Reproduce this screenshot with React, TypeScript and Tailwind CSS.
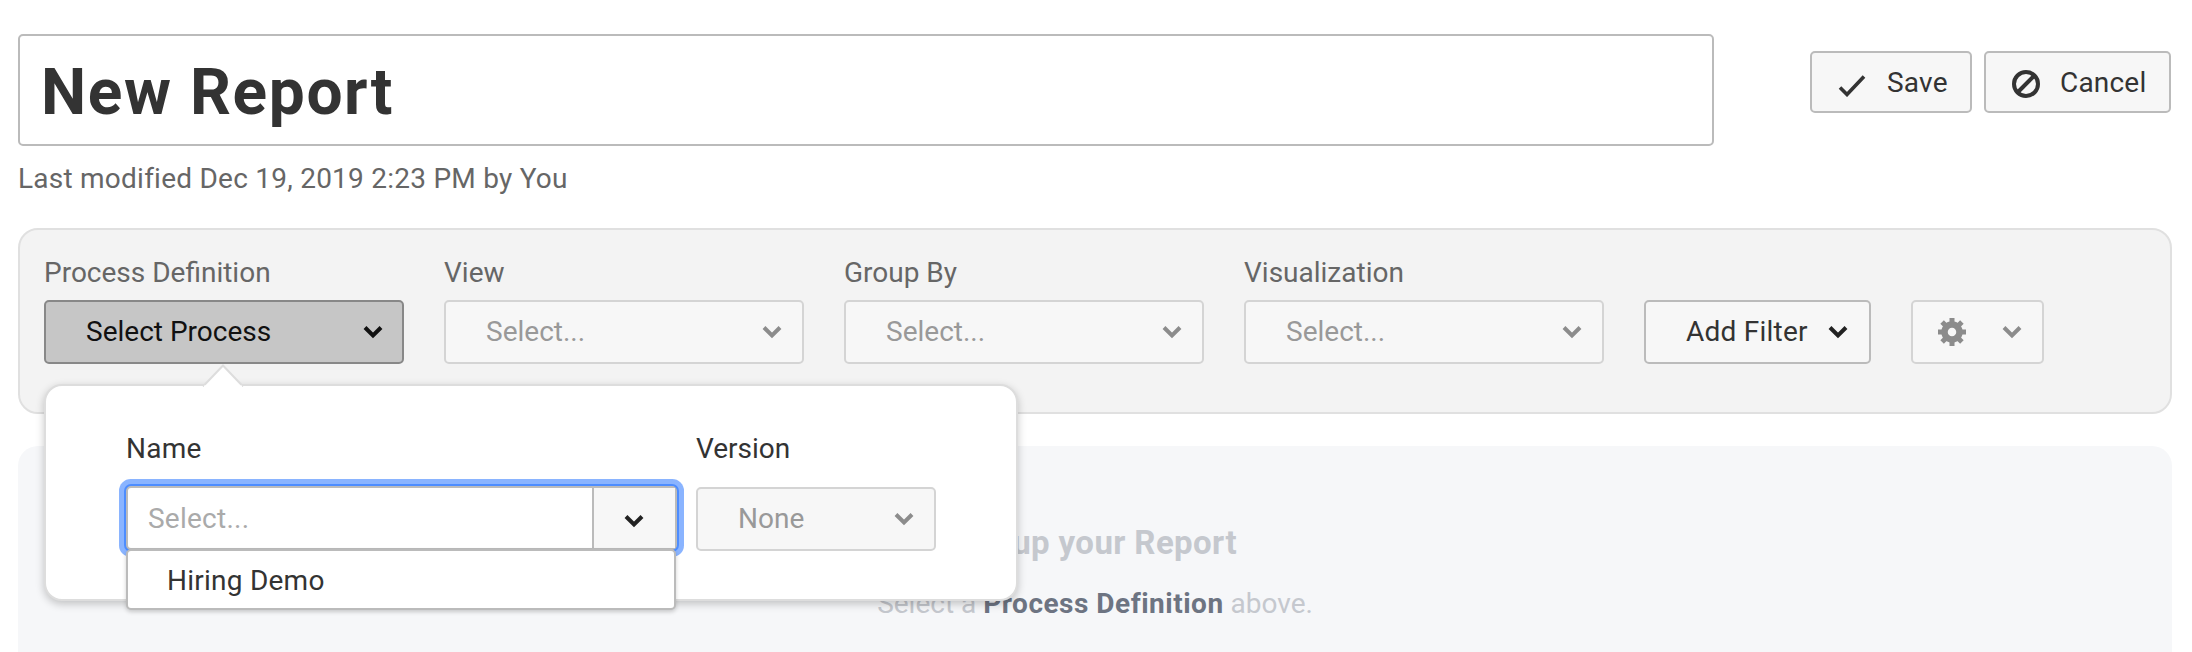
import React from "react";

const FONT = "font-['Roboto','Liberation_Sans',sans-serif]";

function Chevron({ className }: { className: string }) {
  return (
    <svg viewBox="0 0 20 14" className={className} fill="none" stroke="currentColor" strokeWidth="4">
      <path d="M2 2.5l8 8 8-8" />
    </svg>
  );
}

function Gear() {
  return (
    <svg viewBox="0 0 28 28" className="h-[28px] w-[28px] text-[#8c8c8c]" fill="none" stroke="currentColor">
      <circle cx="14" cy="14" r="7.5" strokeWidth="6.5" />
      <g strokeWidth="5">
        <path d="M14 0v5M14 23v5M0 14h5M23 14h5" />
        <path d="M4.1 4.1l3.5 3.5M20.4 20.4l3.5 3.5M23.9 4.1l-3.5 3.5M7.6 20.4l-3.5 3.5" />
      </g>
    </svg>
  );
}

function Field({ label, children }: { label: string; children: React.ReactNode }) {
  return (
    <div className="flex w-[360px] flex-col">
      <label className="mb-[10px] h-[45px] pt-[10px] text-[28px] leading-[36px] text-[#666]">{label}</label>
      {children}
    </div>
  );
}

function DisabledSelect({ text, className }: { text: string; className: string }) {
  return (
    <div className={`flex h-[64px] items-center justify-between rounded-[5px] border-2 border-[#d4d4d4] bg-[#f7f7f7] pl-[40px] pr-[20px] text-[28px] text-[#999] ${className}`}>
      <span>{text}</span>
      <Chevron className="h-[14px] w-[20px] text-[#8c8c8c]" />
    </div>
  );
}

export default function App() {
  return (
    <div className={`relative h-[652px] overflow-hidden bg-white pl-[18px] pr-[20px] pt-[34px] ${FONT}`}>
      <div className="flex items-start justify-between">
        <div className="flex h-[112px] w-[1696px] items-center rounded-[5px] border-2 border-[#bbb] px-[21px] pt-[6px] text-[64px] font-bold tracking-[1.6px] text-[#333]">
          New Report
        </div>
        <div className="mr-[1px] mt-[17px] flex gap-[12px]">
          <button className="flex h-[62px] w-[162px] items-center gap-[21px] rounded-[5px] border-2 border-[#bbb] bg-[#f7f7f7] pl-[26px] pt-[1px] text-[28px] tracking-[0.2px] text-[#333]">
            <svg viewBox="0 0 27 22" className="mt-[6px] h-[22px] w-[28px]" fill="none" stroke="#333" strokeWidth="3.6">
              <path d="M1.5 12.5l7 7L25.5 1.5" />
            </svg>
            Save
          </button>
          <button className="flex h-[62px] w-[187px] items-center gap-[20px] rounded-[5px] border-2 border-[#bbb] bg-[#f7f7f7] pl-[26px] pt-[1px] text-[28px] tracking-[0.2px] text-[#333]">
            <svg viewBox="0 0 28 28" className="mt-[3px] h-[28px] w-[28px]" fill="none" stroke="#333" strokeWidth="4">
              <circle cx="14" cy="14" r="12" />
              <path d="M6 22L22 6" />
            </svg>
            Cancel
          </button>
        </div>
      </div>
      <p className="mt-[14px] text-[28px] leading-[38px] tracking-[0.24px] text-[#666]">Last modified Dec 19, 2019 2:23 PM by You</p>

      <div className="mt-[30px] flex h-[186px] items-start gap-[40px] rounded-[20px] border-2 border-[#e0e0e0] bg-[#f3f3f3] pl-[24px] pt-[15px]">
        <Field label="Process Definition">
          <div className="flex h-[64px] items-center justify-between rounded-[5px] border-2 border-[#888] bg-[#c6c6c6] pl-[40px] pr-[19px] text-[28px] text-[#111]">
            <span>Select Process</span>
            <Chevron className="h-[14px] w-[20px] text-[#111]" />
          </div>
        </Field>
        <Field label="View">
          <DisabledSelect text="Select..." className="w-full" />
        </Field>
        <Field label="Group By">
          <DisabledSelect text="Select..." className="w-full" />
        </Field>
        <Field label="Visualization">
          <DisabledSelect text="Select..." className="w-full" />
        </Field>
        <button className="mt-[55px] flex h-[64px] w-[227px] items-center justify-between rounded-[5px] border-2 border-[#bbb] bg-[#f7f7f7] pl-[40px] pr-[21px] text-[28px] tracking-[0.24px] text-[#333]">
          Add Filter
          <Chevron className="h-[14px] w-[20px] text-[#222]" />
        </button>
        <div className="mt-[55px] flex h-[64px] w-[133px] items-center justify-between rounded-[5px] border-2 border-[#d4d4d4] bg-[#f7f7f7] pl-[25px] pr-[20px]">
          <Gear />
          <Chevron className="h-[14px] w-[20px] text-[#8c8c8c]" />
        </div>
      </div>

      <div className="mt-[32px] flex h-[300px] flex-col items-center rounded-t-[20px] bg-[#f6f7f9] pt-[77px] text-center">
        <h2 className="text-[33px] font-bold leading-[40px] tracking-[0.4px] text-[#c5c8ce]">Set up your Report</h2>
        <p className="mt-[21px] text-[28px] leading-[40px] text-[#c5c8ce]">
          Select a <b className="font-bold tracking-[0.5px] text-[#6d7482]">Process Definition</b> above.
        </p>
      </div>

      {/* popover over the panel */}
      <div className="absolute left-[44px] top-[384px] h-[217px] w-[974px] rounded-[18px] border-2 border-[#ddd] bg-white pl-[80px] shadow-[0_3px_8px_rgba(0,0,0,0.22)]">
        <svg viewBox="0 0 44 22" className="absolute left-[155px] top-[-22px] h-[23px] w-[44px]" fill="white">
          <path d="M2 22L22 1l20 21" stroke="#ddd" strokeWidth="2" />
          <path d="M3 22.5h38" stroke="white" strokeWidth="3" />
        </svg>
        <div className="flex gap-[14px] pt-[45px]">
          <div className="w-[556px]">
            <label className="block text-[28px] leading-[36px] tracking-[0.24px] text-[#333]">Name</label>
            <div className="relative mt-[19px] flex h-[64px] w-[551px] rounded-[5px] border-2 border-[#bbb] bg-white shadow-[0_0_0_2px_#4d8dff,0_0_0_7px_#8ab4ff]">
              <span className="flex-1 pl-[20px] text-[28px] leading-[62px] tracking-[0.24px] text-[#aaa]">Select...</span>
              <span className="flex w-[83px] items-center justify-center border-l-2 border-[#bbb] bg-[#f7f7f7] pr-[2px]">
                <Chevron className="mt-[6px] h-[14px] w-[20px] text-[#222]" />
              </span>
              <div className="absolute left-[-2px] top-[61px] h-[61px] w-[550px] rounded-[5px] border-2 border-[#bbb] bg-white pl-[39px] text-[28px] leading-[60px] tracking-[0.24px] text-[#333] shadow-[0_2px_4px_rgba(0,0,0,0.18)]">
                Hiring Demo
              </div>
            </div>
          </div>
          <div className="w-[240px]">
            <label className="block text-[28px] leading-[36px] text-[#333]">Version</label>
            <DisabledSelect text="None" className="mt-[20px]" />
          </div>
        </div>
      </div>
    </div>
  );
}
